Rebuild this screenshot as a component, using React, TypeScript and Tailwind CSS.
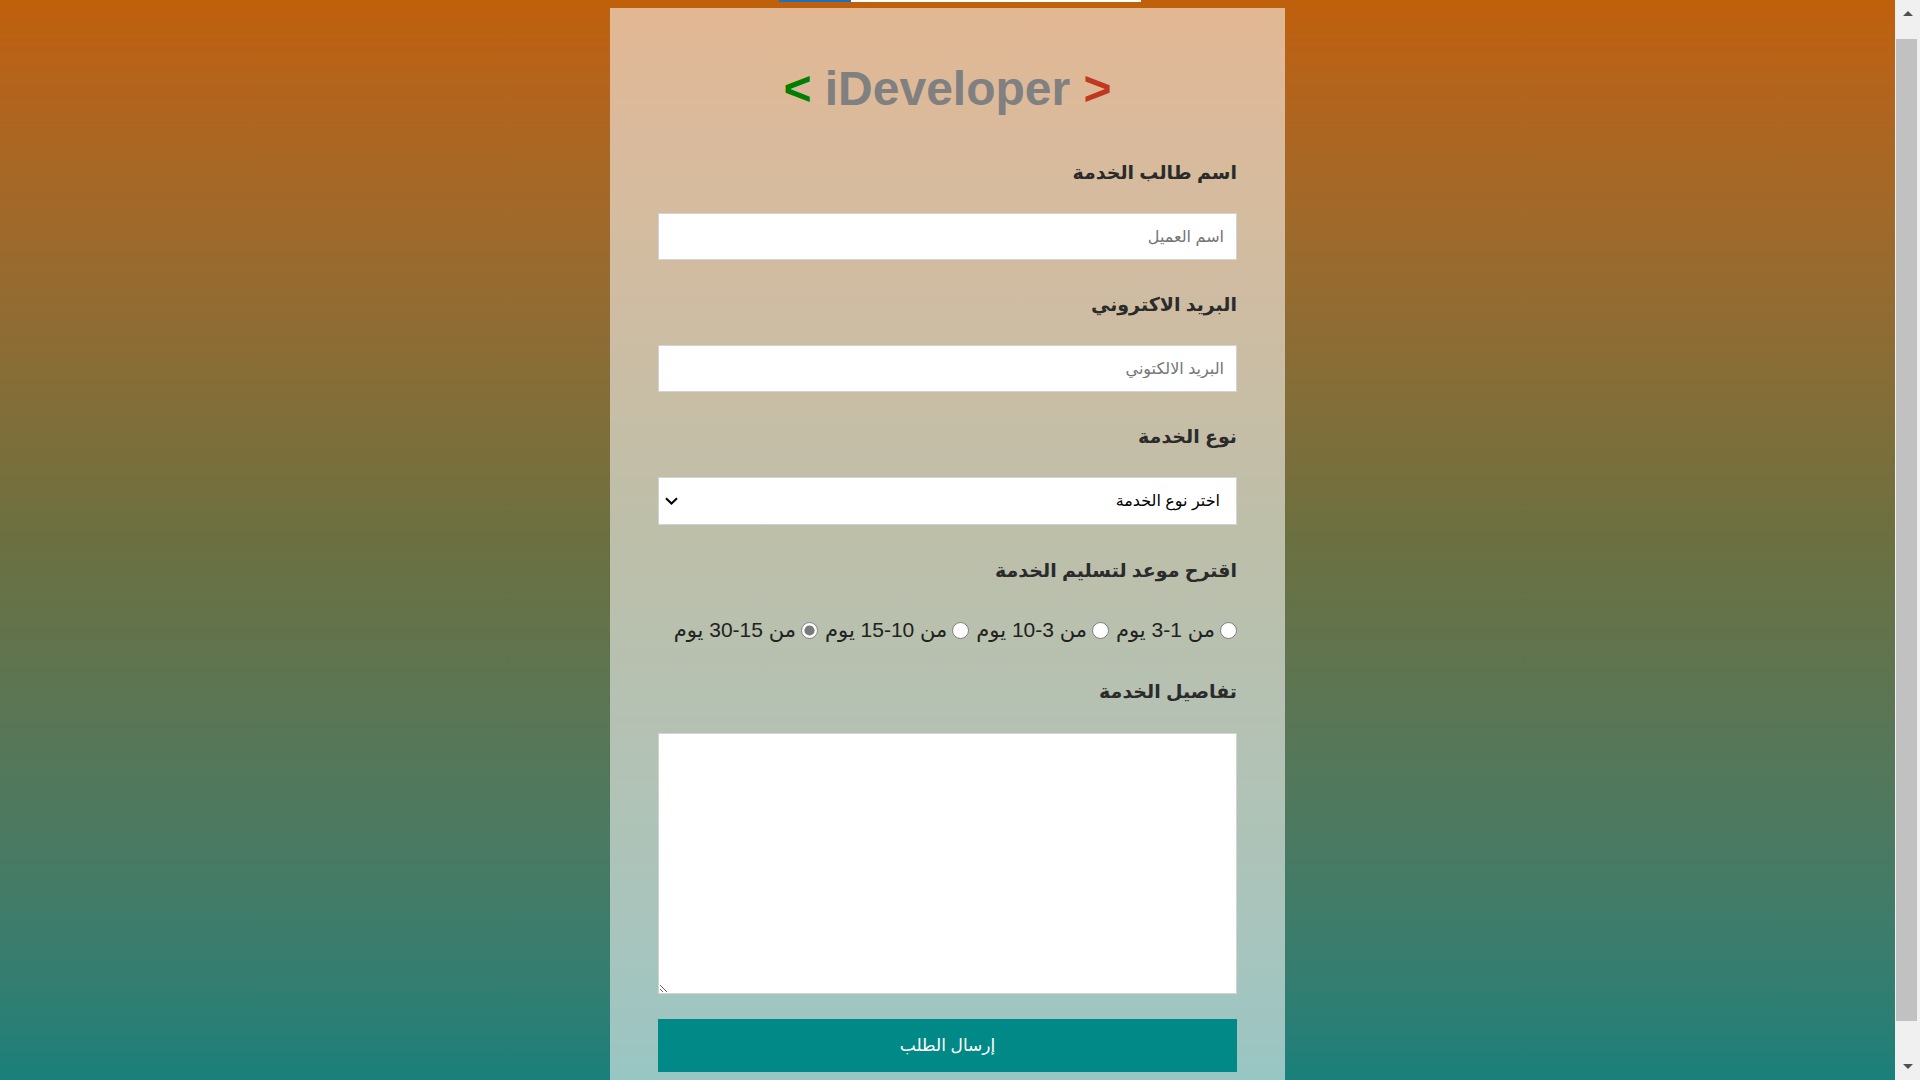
import { useState } from 'react';

const periods = [
  { id: 'p1', label: 'من 1-3 يوم' },
  { id: 'p2', label: 'من 3-10 يوم' },
  { id: 'p3', label: 'من 10-15 يوم' },
  { id: 'p4', label: 'من 15-30 يوم' },
];

export default function App() {
  const [period, setPeriod] = useState('p4');

  return (
    <div className="flex h-screen w-full overflow-hidden font-['Liberation_Sans','DejaVu_Sans',sans-serif]">
      {/* Page */}
      <main className="flex-1 overflow-hidden bg-gradient-to-b from-[#c0600b] via-[#6b7040] to-[#18807a]">
        {/* bottom edge of the bar above (page is scrolled) */}
        <div className="flex h-[2px] pl-[779px]">
          <div className="w-[72px] bg-[#1f6fc0]" />
          <div className="w-[290px] bg-white" />
        </div>

        <div className="mx-auto mt-[6px] w-[675px] bg-white/55 px-12 pt-[54px] pb-10">
          <h1 className="text-center text-[48px] font-bold leading-[54px] text-[#808080]">
            <span className="text-[#008000]">&lt;</span> iDeveloper{' '}
            <span className="text-[#c0391f]">&gt;</span>
          </h1>

          <form dir="rtl" className="flex flex-col" onSubmit={(e) => e.preventDefault()}>
            <label className="mt-[42px] text-[19px] font-bold leading-[30px] text-[#2b2b2b]">اسم طالب الخدمة</label>
            <input
              type="text"
              placeholder="اسم العميل"
              className="mt-[25px] h-[47px] w-full border border-[#d3d3d3] bg-white px-3 text-[16px] outline-none placeholder:text-[#757575]"
            />

            <label className="mt-[30px] text-[19px] font-bold leading-[30px] text-[#2b2b2b]">البريد الاكتروني</label>
            <input
              type="email"
              placeholder="البريد الالكتوني"
              className="mt-[25px] h-[47px] w-full border border-[#d3d3d3] bg-white px-3 text-[16px] outline-none placeholder:text-[#757575]"
            />

            <label className="mt-[30px] text-[19px] font-bold leading-[30px] text-[#2b2b2b]">نوع الخدمة</label>
            <div className="relative mt-[25px]">
              <select
                defaultValue=""
                className="h-[48px] w-full appearance-none border border-[#d3d3d3] bg-white pr-4 pl-10 text-[16px] text-black outline-none"
              >
                <option value="">اختر نوع الخدمة</option>
                <option value="web">تصميم مواقع</option>
                <option value="app">تطبيقات الجوال</option>
              </select>
              <svg
                className="pointer-events-none absolute left-[7px] top-[20px]"
                width="13"
                height="8"
                viewBox="0 0 13 8"
                fill="none"
              >
                <path d="M1 1.2 6.5 6.5 12 1.2" stroke="#000" strokeWidth="2" />
              </svg>
            </div>

            <label className="mt-[31px] text-[19px] font-bold leading-[30px] text-[#2b2b2b]">اقترح موعد لتسليم الخدمة</label>
            <div className="mt-[32px] flex h-[24px] items-center gap-[7px] text-[21px] text-[#222]">
              {periods.map((p) => (
                <label key={p.id} className="flex items-center gap-[5px]">
                  <input
                    type="radio"
                    name="period"
                    checked={period === p.id}
                    onChange={() => setPeriod(p.id)}
                    className="m-0 h-[17px] w-[17px] accent-[#7a7a7a]"
                  />
                  <span>{p.label}</span>
                </label>
              ))}
            </div>

            <label className="mt-[35px] text-[19px] font-bold leading-[30px] text-[#2b2b2b]">تفاصيل الخدمة</label>
            <textarea className="mt-[26px] h-[261px] w-full border border-[#d3d3d3] bg-white p-3 text-[16px] outline-none" />

            <button
              type="submit"
              className="mt-[25px] h-[53px] w-full bg-[#008986] text-[17px] text-white"
            >
              إرسال الطلب
            </button>
          </form>
        </div>
      </main>

      {/* Scrollbar */}
      <div className="flex w-[25px] flex-col bg-[#f0f0f0]">
        <div className="flex h-[39px] w-full justify-center pt-[11px]">
          <div className="h-0 w-0 border-x-[5px] border-b-[5px] border-x-transparent border-b-[#505050]" />
        </div>
        <div className="ml-[1px] h-[982px] w-[21px] bg-[#c1c1c1]" />
        <div className="flex flex-1 w-full justify-center pt-[43px]">
          <div className="h-0 w-0 border-x-[5px] border-t-[5px] border-x-transparent border-t-[#505050]" />
        </div>
      </div>
    </div>
  );
}
